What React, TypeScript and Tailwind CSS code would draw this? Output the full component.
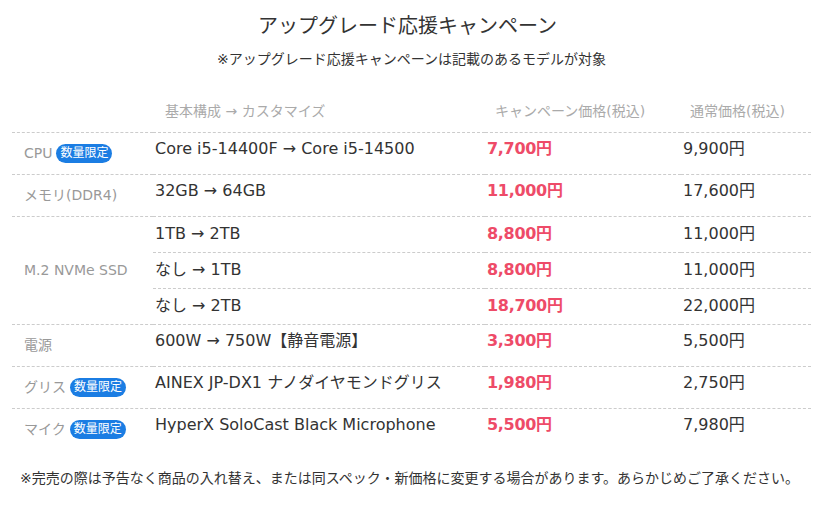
import React from 'react';

interface Row {
  label?: string;
  span?: number;
  limited?: boolean;
  spec: string;
  campaign: string;
  normal: string;
  sub?: boolean;
}

const rows: Row[] = [
  { label: 'CPU', limited: true, spec: 'Core i5-14400F → Core i5-14500', campaign: '7,700円', normal: '9,900円' },
  { label: 'メモリ(DDR4)', spec: '32GB → 64GB', campaign: '11,000円', normal: '17,600円' },
  { label: 'M.2 NVMe SSD', span: 3, spec: '1TB → 2TB', campaign: '8,800円', normal: '11,000円', sub: true },
  { spec: 'なし → 1TB', campaign: '8,800円', normal: '11,000円', sub: true },
  { spec: 'なし → 2TB', campaign: '18,700円', normal: '22,000円', sub: true },
  { label: '電源', spec: '600W → 750W【静音電源】', campaign: '3,300円', normal: '5,500円' },
  { label: 'グリス', limited: true, spec: 'AINEX JP-DX1 ナノダイヤモンドグリス', campaign: '1,980円', normal: '2,750円' },
  { label: 'マイク', limited: true, spec: 'HyperX SoloCast Black Microphone', campaign: '5,500円', normal: '7,980円' },
];

function Badge() {
  return (
    <span className="ml-[4px] inline-flex h-[19px] items-center rounded-full bg-[#1b7de3] px-[4px] text-[12px] leading-none text-white">
      数量限定
    </span>
  );
}

export default function App() {
  return (
    <div
      className="w-[830px] h-[506px] bg-white text-[#333]"
      style={{ fontFamily: '"DejaVu Sans", "Noto Sans CJK JP", sans-serif' }}
    >
      <div className="w-[823px]">
        <h2 className="pt-[12px] pr-[8px] text-center text-[20px] leading-[28px]">アップグレード応援キャンペーン</h2>
        <p className="mt-[9px] text-center text-[14px] leading-[20px]">※アップグレード応援キャンペーンは記載のあるモデルが対象</p>
      </div>

      <table className="ml-[12px] mt-[22px] w-[799px] table-fixed border-collapse">
        <colgroup>
          <col className="w-[141px]" />
          <col className="w-[332px]" />
          <col className="w-[196px]" />
          <col className="w-[130px]" />
        </colgroup>
        <thead>
          <tr className="h-[41px] border-b border-dashed border-[#ccc] text-[14px] text-[#aaa]">
            <th />
            <th className="pl-[12px] text-left font-normal">基本構成 → カスタマイズ</th>
            <th className="pl-[10px] text-left font-normal">キャンペーン価格(税込)</th>
            <th className="pl-[9px] text-left font-normal">通常価格(税込)</th>
          </tr>
        </thead>
        <tbody>
          {rows.map((r, i) => {
            const last = i === rows.length - 1;
            const border = last ? '' : 'border-b border-dashed border-[#ccc]';
            const pad = r.sub ? '' : 'pb-[8px]';
            return (
              <tr key={i} className={r.sub ? 'h-[36px]' : 'h-[42px]'}>
                {r.label && (
                  <td
                    rowSpan={r.span || 1}
                    className={`${r.span ? 'border-b border-dashed border-[#ccc]' : border} pl-[12px] align-middle text-[14px] text-[#999]`}
                  >
                    <span className="inline-flex items-center">
                      {r.label}
                      {r.limited && <Badge />}
                    </span>
                  </td>
                )}
                <td className={`${border} ${pad} pl-[2px] text-[16px] whitespace-nowrap`}>{r.spec}</td>
                <td className={`${border} ${pad} pl-[2px] text-[16px] font-bold text-[#ee4b68] tracking-[-0.3px]`}>{r.campaign}</td>
                <td className={`${border} ${pad} pl-[2px] text-[16px]`}>{r.normal}</td>
              </tr>
            );
          })}
        </tbody>
      </table>

      <p className="ml-[20px] mt-[18px] text-[14px] leading-[20px] whitespace-nowrap">
        ※完売の際は予告なく商品の入れ替え、または同スペック・新価格に変更する場合があります。あらかじめご了承ください。
      </p>
    </div>
  );
}
